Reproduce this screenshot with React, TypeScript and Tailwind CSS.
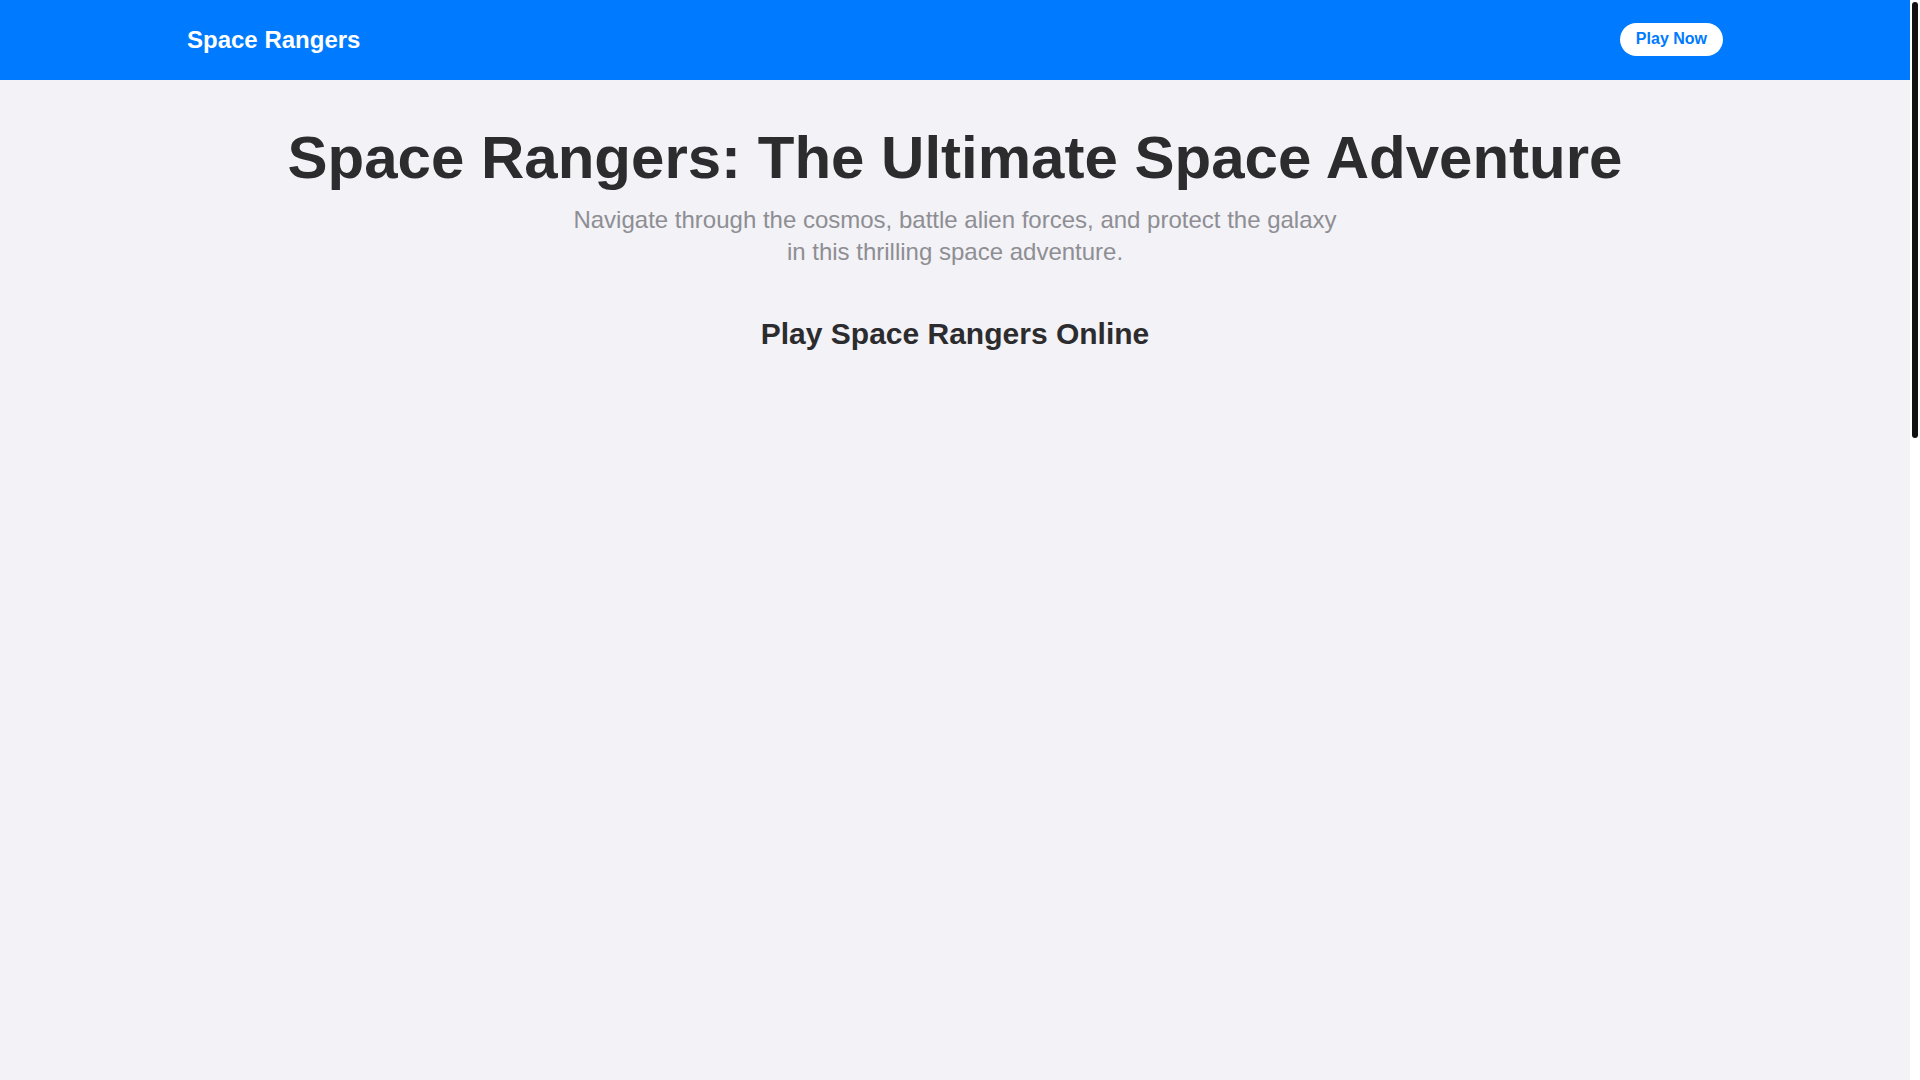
export default function App() {
  return (
    <div className="flex h-screen bg-white font-['Liberation_Sans',Arial,sans-serif] text-[#2c2c2e]">
      {/* Page */}
      <div className="flex-1 overflow-hidden bg-[#f2f2f7]">
        {/* Top bar */}
        <header className="h-20 bg-[#007aff]">
          <div className="mx-auto flex h-full max-w-[1536px] items-center justify-between">
            <a href="#" className="text-2xl font-bold text-white">
              Space Rangers
            </a>
            <a
              href="#"
              className="mb-[2px] flex h-[33px] items-center rounded-full bg-white px-4 text-base font-bold text-[#007aff]"
            >
              Play Now
            </a>
          </div>
        </header>

        <main className="mx-auto max-w-[1536px] pt-12">
          {/* Hero */}
          <section className="text-center">
            <h1 className="text-6xl leading-none font-bold">
              Space Rangers: The Ultimate Space Adventure
            </h1>
            <p className="mx-auto mt-4 max-w-3xl text-2xl text-[#8e8e93]">
              Navigate through the cosmos, battle alien forces, and protect the galaxy in this thrilling space adventure.
            </p>
          </section>

          {/* Game */}
          <section className="mt-12 text-center">
            <h2 className="text-3xl font-bold">Play Space Rangers Online</h2>
          </section>
        </main>
      </div>

      {/* Scrollbar */}
      <div className="w-[10px] shrink-0 bg-white">
        <div className="mt-[2px] ml-[2px] h-[436px] w-[6px] rounded-full bg-[#111]" />
      </div>
    </div>
  );
}
